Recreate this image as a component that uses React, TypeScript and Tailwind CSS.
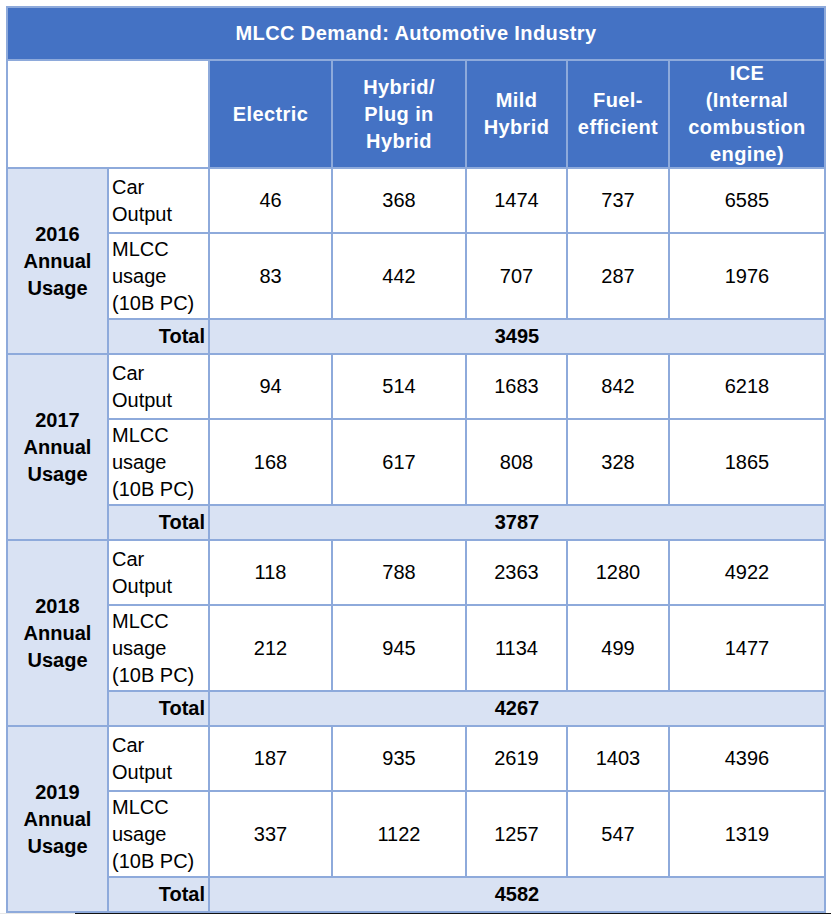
import React from "react";

type YearBlock = {
  year: string;
  output: number[];
  usage: number[];
  total: number;
};

const blocks: YearBlock[] = [
  { year: "2016", output: [46, 368, 1474, 737, 6585], usage: [83, 442, 707, 287, 1976], total: 3495 },
  { year: "2017", output: [94, 514, 1683, 842, 6218], usage: [168, 617, 808, 328, 1865], total: 3787 },
  { year: "2018", output: [118, 788, 2363, 1280, 4922], usage: [212, 945, 1134, 499, 1477], total: 4267 },
  { year: "2019", output: [187, 935, 2619, 1403, 4396], usage: [337, 1122, 1257, 547, 1319], total: 4582 },
];

const headers: string[][] = [
  ["Electric"],
  ["Hybrid/", "Plug in", "Hybrid"],
  ["Mild", "Hybrid"],
  ["Fuel-", "efficient"],
  ["ICE", "(Internal", "combustion", "engine)"],
];

const Lines = ({ lines }: { lines: string[] }) => (
  <>
    {lines.map((l, i) => (
      <React.Fragment key={i}>
        {i > 0 && <br />}
        {l}
      </React.Fragment>
    ))}
  </>
);

export default function App() {
  return (
    <div className="bg-white min-h-[914px] pt-[6px] pl-[6px] font-['Liberation_Sans',Arial,sans-serif] text-[20px] leading-[27px] text-black">
      {/* table: the blue-grey background shows through the 2px gaps as grid lines */}
      <div className="w-[820px] grid grid-cols-[99px_99px_121px_132px_99px_100px_154px] auto-rows-auto gap-[2px] p-[2px] bg-[#8eaadb]">
        {/* Title */}
        <div className="col-span-7 h-[51px] bg-[#4472c4] flex items-center justify-center text-white font-bold tracking-[0.4px]">
          MLCC Demand: Automotive Industry
        </div>

        {/* Header row */}
        <div className="col-span-2 h-[106px] bg-white" />
        {headers.map((h, i) => (
          <div
            key={i}
            className="h-[106px] bg-[#4472c4] flex items-center justify-center text-center text-white font-bold tracking-[0.4px]"
          >
            <div>
              <Lines lines={h} />
            </div>
          </div>
        ))}

        {blocks.map((b) => (
          <React.Fragment key={b.year}>
            <div className="row-span-3 bg-[#d9e2f3] flex items-center justify-center text-center font-bold">
              <div>
                {b.year}
                <br />
                Annual
                <br />
                Usage
              </div>
            </div>

            {/* Car output */}
            <div className="h-[63px] bg-white flex items-center pl-[3px]">
              <div>
                Car
                <br />
                Output
              </div>
            </div>
            {b.output.map((v, i) => (
              <div key={i} className="h-[63px] bg-white flex items-center justify-center">
                {v}
              </div>
            ))}

            {/* MLCC usage */}
            <div className="h-[84px] bg-white flex items-center pl-[3px]">
              <div>
                MLCC
                <br />
                usage
                <br />
                (10B PC)
              </div>
            </div>
            {b.usage.map((v, i) => (
              <div key={i} className="h-[84px] bg-white flex items-center justify-center">
                {v}
              </div>
            ))}

            {/* Total */}
            <div className="h-[33px] bg-[#d9e2f3] flex items-center justify-end pr-[3px] font-bold">
              Total
            </div>
            <div className="col-span-5 h-[33px] bg-[#d9e2f3] flex items-center justify-center font-bold">
              {b.total}
            </div>
          </React.Fragment>
        ))}
      </div>
      <div className="-ml-[6px] flex h-[3px]">
        <div className="w-[75px] bg-[#e8e8e8]" />
        <div className="flex-1 bg-[#111]" />
      </div>
    </div>
  );
}
